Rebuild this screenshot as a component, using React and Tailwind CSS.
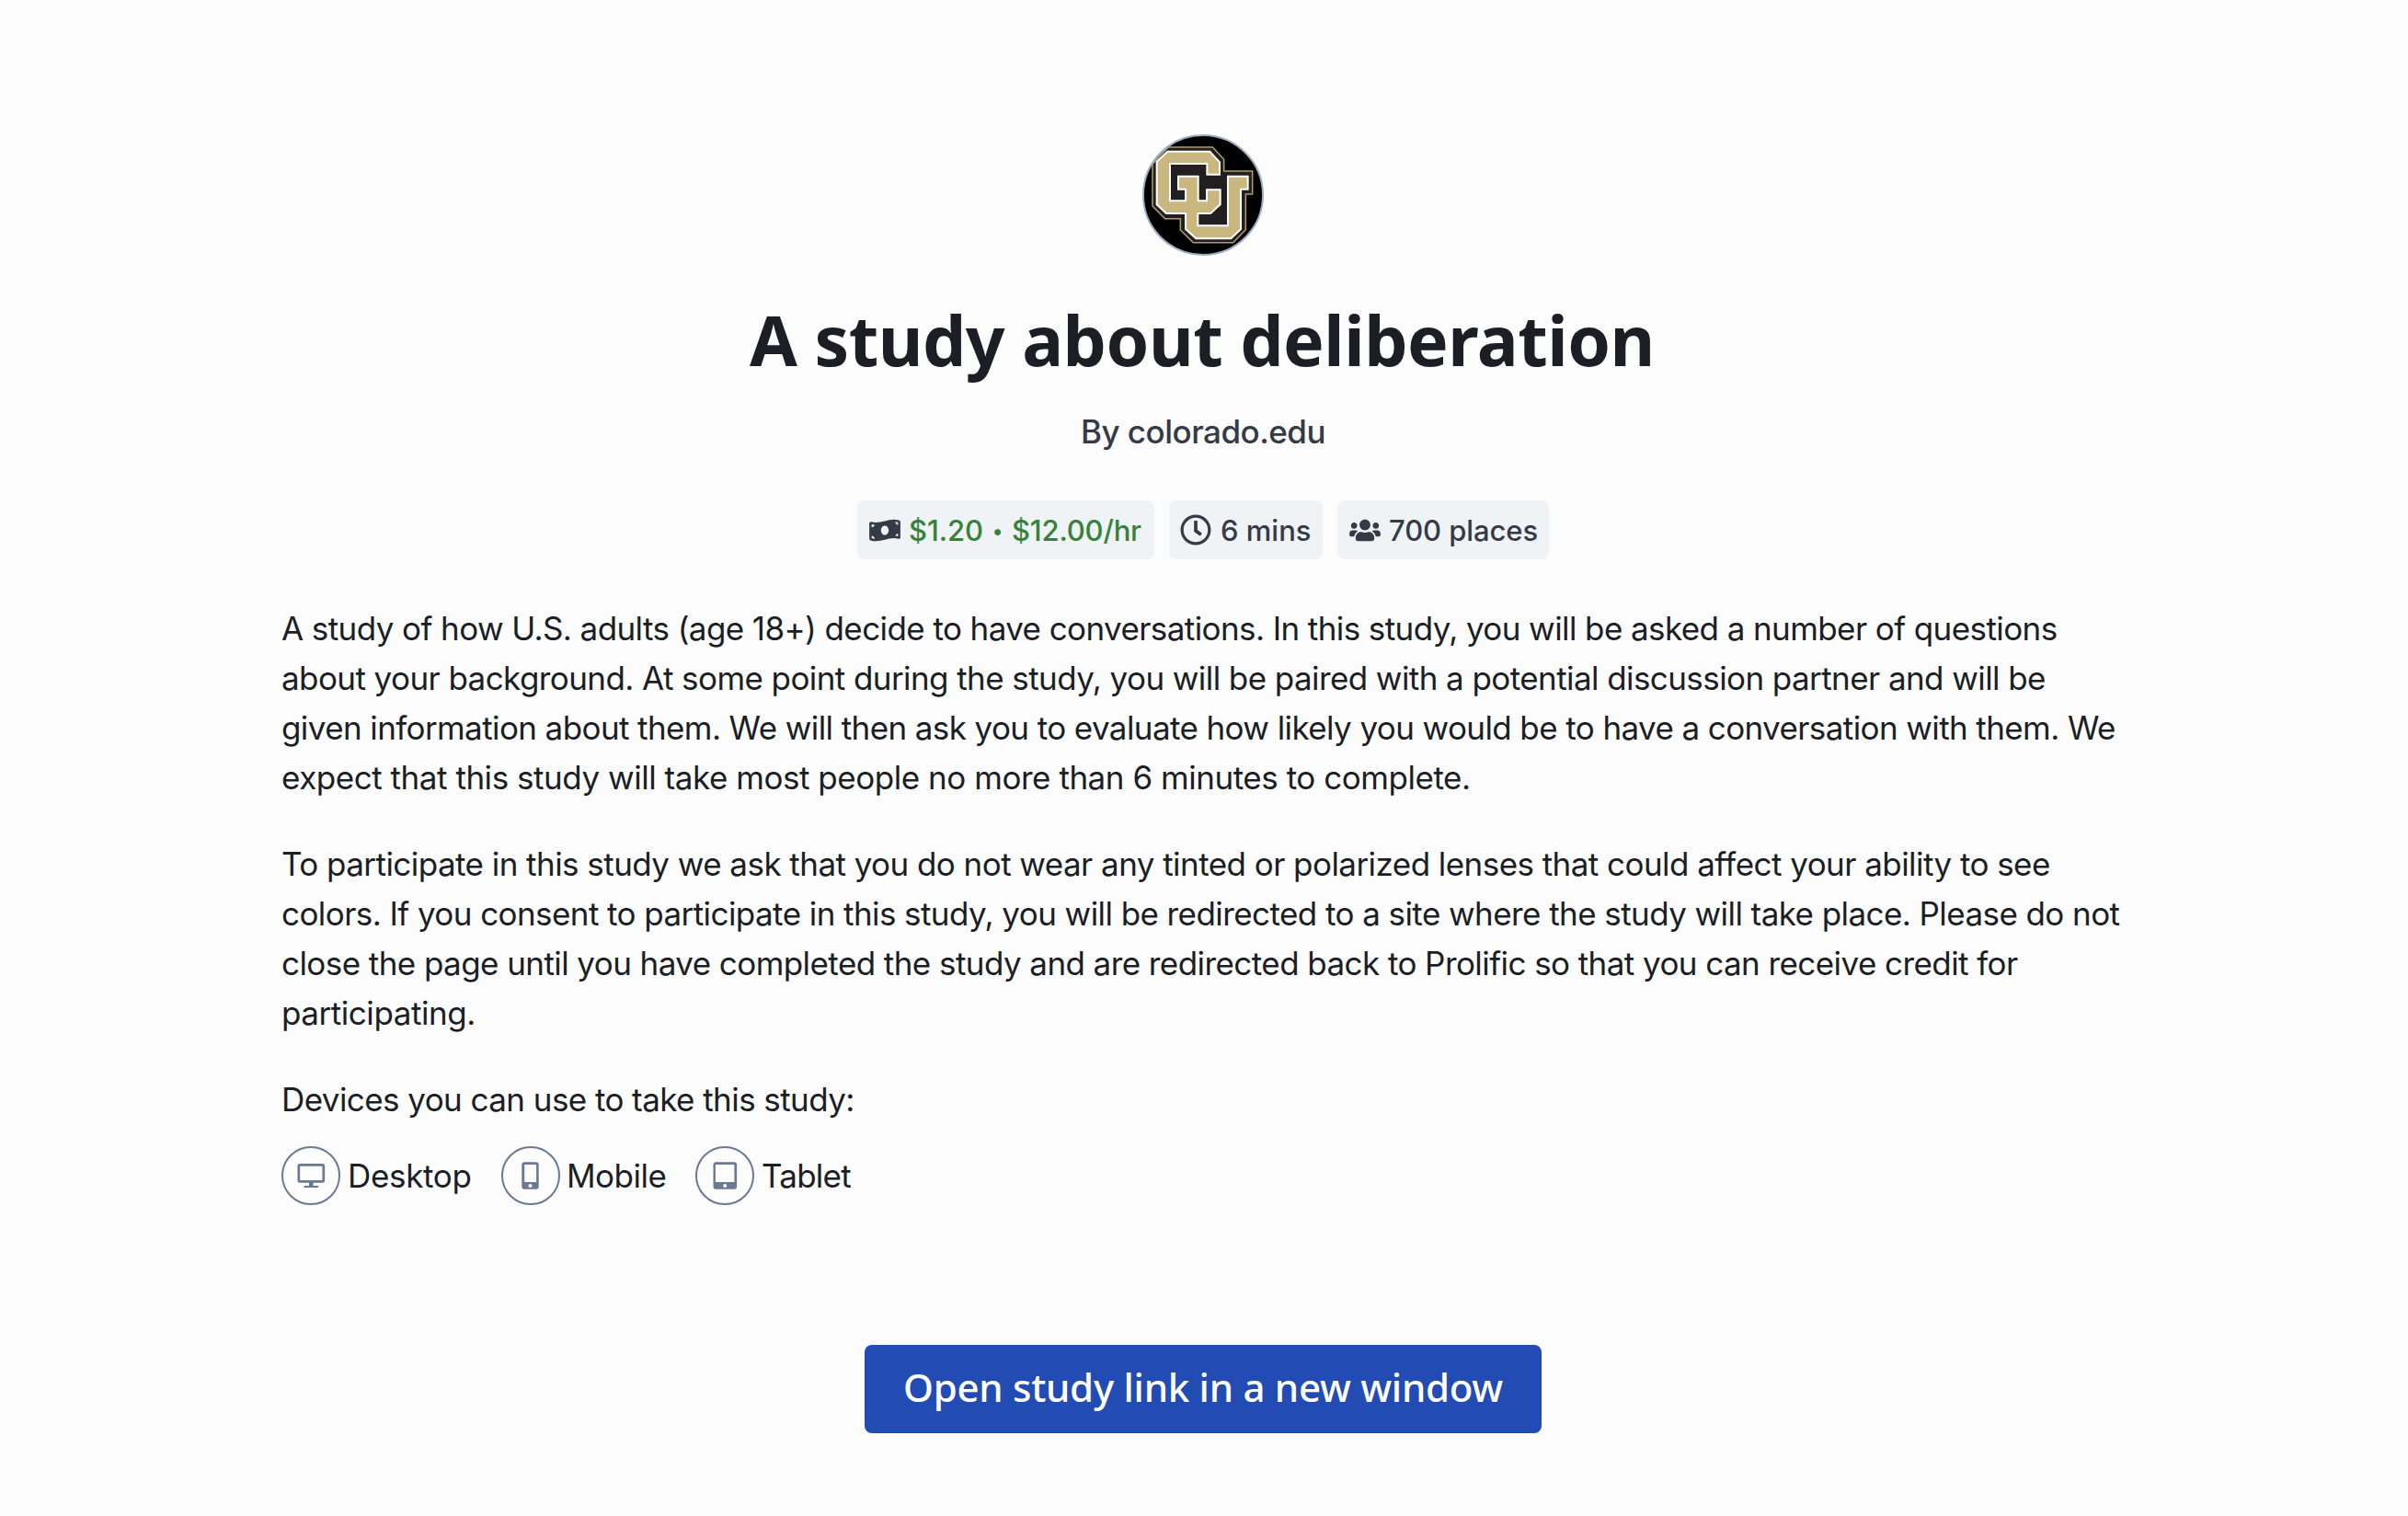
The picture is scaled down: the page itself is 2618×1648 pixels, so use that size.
import React from "react";
import { FaMoneyBillWave, FaRegClock, FaUsers } from "react-icons/fa";

function Logo() {
  return (
    <svg viewBox="36 33 396 396" className="size-[132px]" aria-label="CU logo">
      <circle cx="234" cy="231" r="195" fill="#000" />
      <path
        d="M120 75H265L302 115V153H395V228H373V344L332 386H202L160 345V308H110L69 267V130Z"
        fill="#231f20"
        stroke="#b09d68"
        strokeWidth="4.5"
      />
      <path
        d="M118 89H256L288 124V164H247V129H126V250H177V212H153V170H218V250H246V214H290V262L258 291H217V331H315V170H380V212H357V342L325 373H211L177 342V291H114L83 262V122Z"
        fill="#cab77f"
        stroke="#fff"
        strokeWidth="6"
      />
      <circle cx="234" cy="231" r="195" fill="none" stroke="#9dadc6" strokeWidth="6" />
    </svg>
  );
}

function DesktopIcon() {
  return (
    <svg viewBox="0 0 64 64" className="size-16" fill="none" stroke="#6b7994">
      <circle cx="32" cy="32" r="31" strokeWidth="2" />
      <rect x="18.8" y="20.3" width="27" height="18" rx="1.2" strokeWidth="2.7" />
      <path d="M30 39h4.5v4H30z" fill="#6b7994" stroke="none" />
      <path d="M25.3 44h14" strokeWidth="2.2" strokeLinecap="round" />
    </svg>
  );
}

function MobileIcon() {
  return (
    <svg viewBox="0 0 64 64" className="size-16" fill="none" stroke="#6b7994">
      <circle cx="32" cy="32" r="31" strokeWidth="2" />
      <path
        fill="#6b7994"
        stroke="none"
        fillRule="evenodd"
        d="M25.3 17.2h12.4a3 3 0 0 1 3 3v23.6a3 3 0 0 1-3 3H25.3a3 3 0 0 1-3-3V20.2a3 3 0 0 1 3-3ZM25.2 20.7a.6.6 0 0 1 .6-.6h11.700a.6.6 0 0 1 .6.6V39H25.2ZM31.500 41a2 2 0 1 0 0 4 2 2 0 0 0 0-4Z"
      />
    </svg>
  );
}

function TabletIcon() {
  return (
    <svg viewBox="0 0 64 64" className="size-16" fill="none" stroke="#6b7994">
      <circle cx="32" cy="32" r="31" strokeWidth="2" />
      <path
        fill="#6b7994"
        stroke="none"
        fillRule="evenodd"
        d="M22.5 17.2h19.6a3 3 0 0 1 3 3v23.6a3 3 0 0 1-3 3H22.5a3 3 0 0 1-3-3V20.2a3 3 0 0 1 3-3ZM21.900 20.700a.6.6 0 0 1 .6-.6h19.300a.6.6 0 0 1 .6.6V39H21.900ZM32.200 41a2 2 0 1 0 0 4 2 2 0 0 0 0-4Z"
      />
    </svg>
  );
}

export default function App() {
  return (
    <main className="flex h-[1648px] w-[2618px] flex-col items-start overflow-hidden bg-[#fcfcfc] pl-[306px] font-['Inter',sans-serif] text-[#1b1e24]">
      <div className="flex w-[2004px] flex-col items-center pt-[146px]">
        <Logo />
        <h1 className="mt-[43px] h-24 whitespace-nowrap pr-[2px] font-['Noto_Sans',sans-serif] text-[75px] leading-[96px] font-bold tracking-[-0.5px]">
          A study about deliberation
        </h1>
        <p className="mt-[25px] text-[35px] leading-[54px] font-medium tracking-[-0.5px] text-[#343a46]">
          By colorado.edu
        </p>

        <div className="mt-12 flex gap-4 text-[31px] leading-[62px] font-medium whitespace-nowrap text-[#343a46]">
          <div className="flex h-16 w-[323px] items-center rounded-lg bg-[#eff3f6] pl-[13px]">
            <FaMoneyBillWave className="h-[27px] w-[34px] shrink-0" />
            <span className="ml-[9px] flex pt-[2px] text-[#37813b]">
              <span className="w-[81px] tracking-[-0.1px]">$1.20</span>
              <span className="w-[31px] text-center text-[22px]">•</span>
              <span className="tracking-[-0.2px]">$12.00/hr</span>
            </span>
          </div>
          <div className="flex h-16 w-[167px] items-center rounded-lg bg-[#eff3f6] pl-[12px]">
            <FaRegClock className="size-[34px] shrink-0" />
            <span className="ml-[10px] pt-[2px]">6 mins</span>
          </div>
          <div className="flex h-16 w-[230px] items-center rounded-lg bg-[#eff3f6] pl-[13px]">
            <FaUsers className="h-[27px] w-[34px] shrink-0" />
            <span className="ml-[9px] pt-[2px] tracking-[-0.08px]">700 places</span>
          </div>
        </div>
      </div>

      <section className="mt-12 text-[35px] leading-[54px] whitespace-nowrap">
        <p>
          <span className="block tracking-[-0.59px]">A study of how U.S. adults (age 18+) decide to have conversations. In this study, you will be asked a number of questions</span>
          <span className="block tracking-[-0.578px]">about your background. At some point during the study, you will be paired with a potential discussion partner and will be</span>
          <span className="block tracking-[-0.599px]">given information about them. We will then ask you to evaluate how likely you would be to have a conversation with them. We</span>
          <span className="block tracking-[-0.462px]">expect that this study will take most people no more than 6 minutes to complete.</span>
        </p>
        <p className="mt-10">
          <span className="block tracking-[-0.55px]">To participate in this study we ask that you do not wear any tinted or polarized lenses that could affect your ability to see</span>
          <span className="block tracking-[-0.573px]">colors. If you consent to participate in this study, you will be redirected to a site where the study will take place. Please do not</span>
          <span className="block tracking-[-0.57px]">close the page until you have completed the study and are redirected back to Prolific so that you can receive credit for</span>
          <span className="block tracking-[-0.45px]">participating.</span>
        </p>
        <p className="mt-10 tracking-[-0.57px]">Devices you can use to take this study:</p>
        <ul className="mt-6 flex h-16 items-center">
          <li className="flex w-[239px] items-center gap-2">
            <DesktopIcon />
            <span className="tracking-[-0.32px]">Desktop</span>
          </li>
          <li className="flex w-[211px] items-center gap-[7px]">
            <MobileIcon />
            <span className="tracking-[-0.5px]">Mobile</span>
          </li>
          <li className="flex items-center gap-2">
            <TabletIcon />
            <span className="tracking-[-0.75px]">Tablet</span>
          </li>
        </ul>
      </section>

      <div className="mt-[152px] flex w-[2004px] justify-center">
        <button className="h-24 w-[736px] rounded-lg bg-[#224bb4] pb-[5px] font-['Noto_Sans',sans-serif] text-[42px] font-medium tracking-[-0.26px] whitespace-nowrap text-white">
          Open study link in a new window
        </button>
      </div>
    </main>
  );
}
